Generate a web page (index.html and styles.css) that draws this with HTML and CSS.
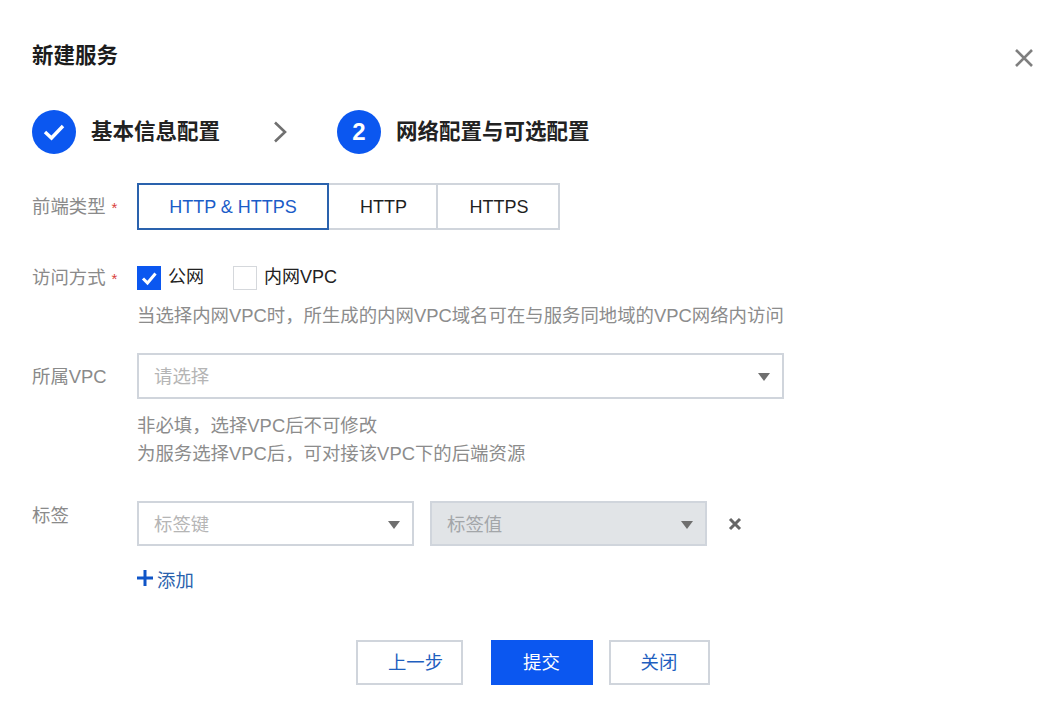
FILE: index.html
```html
<!DOCTYPE html>
<html lang="zh-CN">
<head>
<meta charset="utf-8">
<title>新建服务</title>
<link rel="stylesheet" href="styles.css">
</head>
<body>
<div class="dialog">
  <header class="head">
    <h1 class="title">新建服务</h1>
    <svg class="close" viewBox="0 0 18 18" aria-label="关闭"><path d="M1 1L17 17M17 1L1 17"/></svg>
  </header>

  <div class="steps">
    <span class="num"><svg class="tick" viewBox="0 0 22 18"><path d="M2 9L8.5 15L20 3"/></svg></span>
    <span class="step-text step-a">基本信息配置</span>
    <svg class="chev" viewBox="0 0 14 22"><path d="M2 1.5L12 11L2 20.5"/></svg>
    <span class="num">2</span>
    <span class="step-text">网络配置与可选配置</span>
  </div>

  <div class="row r-type">
    <div class="label">前端类型<span class="star">*</span></div>
    <div class="seg">
      <span class="seg-btn seg-on w1">HTTP &amp; HTTPS</span>
      <span class="seg-btn w2">HTTP</span>
      <span class="seg-btn w3">HTTPS</span>
    </div>
  </div>

  <div class="row r-access">
    <div class="label">访问方式<span class="star">*</span></div>
    <div class="checks">
      <span class="check">
        <span class="box box-on"><svg viewBox="0 0 24 24"><path d="M6 12.5L10.5 17L18.5 7.5"/></svg></span><span class="check-text">公网</span>
      </span>
      <span class="check">
        <span class="box"></span><span class="check-text">内网VPC</span>
      </span>
    </div>
  </div>
  <p class="hint h-access">当选择内网VPC时，所生成的内网VPC域名可在与服务同地域的VPC网络内访问</p>

  <div class="row r-vpc">
    <div class="label">所属VPC</div>
    <div class="select s-wide"><span class="sel-text">请选择</span><i class="caret"></i></div>
  </div>
  <p class="hint h-vpc">非必填，选择VPC后不可修改<br>为服务选择VPC后，可对接该VPC下的后端资源</p>

  <div class="row r-tag">
    <div class="label label-top">标签</div>
    <div class="select s-tag"><span class="sel-text">标签键</span><i class="caret"></i></div>
    <div class="select s-tag s-off"><span class="sel-text">标签值</span><i class="caret"></i></div>
    <svg class="del" viewBox="0 0 14 14"><path d="M2 2L12 12M12 2L2 12"/></svg>
  </div>
  <div class="add">
    <svg viewBox="0 0 16 16"><path d="M8 0V16M0 8H16"/></svg>添加
  </div>

  <footer class="foot">
    <span class="btn b-prev">上一步</span>
    <span class="btn btn-main">提交</span>
    <span class="btn b-close">关闭</span>
  </footer>
</div>
</body>
</html>
```
FILE: styles.css
```css
* { box-sizing: border-box; }
html, body { margin: 0; background: #fff; }
body {
  width: 1046px;
  height: 715px;
  overflow: hidden;
  font-family: "Liberation Sans", "Noto Sans CJK SC", sans-serif;
  font-size: 18px;
  color: #1f1f1f;
}
.dialog { padding: 41px 13px 0 32px; }

.head { display: flex; justify-content: space-between; align-items: center; height: 30px; }
.title { margin: 0; font-size: 21.5px; line-height: 30px; font-weight: 700; color: #1c1c1c; }
.close { width: 18px; height: 18px; margin-top: 4px; }
.close path { fill: none; stroke: #7f7f7f; stroke-width: 2.6; }

.steps { display: flex; align-items: center; margin-top: 39px; height: 44px; }
.num {
  width: 44px; height: 44px; border-radius: 50%;
  background: #0b57f0; color: #fff;
  display: flex; align-items: center; justify-content: center;
  font-size: 24px; font-weight: 700;
}
.tick { width: 22px; height: 18px; }
.tick path { fill: none; stroke: #fff; stroke-width: 3.4; }
.step-text { margin-left: 15px; font-size: 21.5px; font-weight: 700; color: #222; line-height: 30px; }
.step-a { width: 128px; white-space: nowrap; }
.chev { width: 14px; height: 22px; margin: 0 50px 0 54px; }
.chev path { fill: none; stroke: #707070; stroke-width: 2.6; }

.row { display: flex; align-items: center; }
.label { width: 105px; flex: none; padding-top: 2px; color: #8a8a8a; font-size: 18.4px; line-height: 28px; white-space: nowrap; }
.label-top { align-self: flex-start; padding-top: 1px; }
.star { color: #d9403a; font-size: 15px; margin-left: 6px; }

.r-type { margin-top: 29px; }
.seg { display: flex; height: 47px; }
.seg-btn {
  display: flex; align-items: center; justify-content: center;
  padding: 1px 0 0 2px;
  border: 2px solid #d0d5dc; border-left-width: 0; color: #1f1f1f;
}
.seg-on { padding-left: 0; border: 2px solid #2a62ad; color: #1a5cc8; }
.w1 { width: 192px; }
.w2 { width: 109px; }
.w3 { width: 122px; }

.r-access { margin-top: 32px; }
.checks { display: flex; height: 24px; }
.check { display: flex; align-items: center; font-size: 18px; line-height: 24px; color: #222; margin-right: 29px; }
.check-text { padding-bottom: 2px; }
.box { width: 24px; height: 24px; border: 1.5px solid #d5d8dc; margin-right: 7px; background: #fff; }
.box-on { background: #0b57f0; border: 0; }
.box svg { display: block; width: 24px; height: 24px; }
.box svg path { fill: none; stroke: #fff; stroke-width: 3; }

.hint { margin: 13px 0 0 105px; color: #8c8c8c; font-size: 18.4px; line-height: 28px; white-space: nowrap; }
.h-access { margin-top: 9px; }

.r-vpc { margin-top: 23px; }
.select {
  display: flex; align-items: center; justify-content: space-between;
  height: 46px; padding: 0 12px 0 15px;
  border: 2px solid #d0d5dc; background: #fff;
  color: #b5b5b5; font-size: 18.4px;
}
.sel-text { padding-bottom: 2px; }
.s-wide { width: 647px; }
.s-tag { width: 277px; height: 45px; margin-right: 16px; }
.s-off { background: #e1e4e7; color: #a3a6a9; margin-right: 21px; }
.caret {
  width: 0; height: 0;
  margin-top: 2px;
  border-left: 6px solid transparent; border-right: 6px solid transparent;
  border-top: 8px solid #6f6f6f;
}

.r-tag { margin-top: 33px; }
.del { width: 14px; height: 14px; }
.del path { fill: none; stroke: #666; stroke-width: 3; }

.add {
  display: flex; align-items: center;
  margin: 19px 0 0 105px; height: 28px;
  color: #2a62ad; font-size: 18.4px;
}
.add svg { width: 16px; height: 16px; margin: -3px 4px 0 0; }
.add svg path { fill: none; stroke: #0f55c8; stroke-width: 3; }

.foot { display: flex; justify-content: center; margin-top: 47px; }
.btn {
  display: flex; align-items: center; justify-content: center;
  height: 45px; padding-bottom: 4px;
  border: 2px solid #d0d5dc; background: #fff;
  color: #1f5fbf; font-size: 18.4px;
}
.b-prev { width: 107px; margin-right: 28px; padding-left: 13px; }
.b-close { width: 101px; margin-left: 16px; }
.btn-main { width: 102px; background: #0b57f0; border: 0; color: #fff; }
```
